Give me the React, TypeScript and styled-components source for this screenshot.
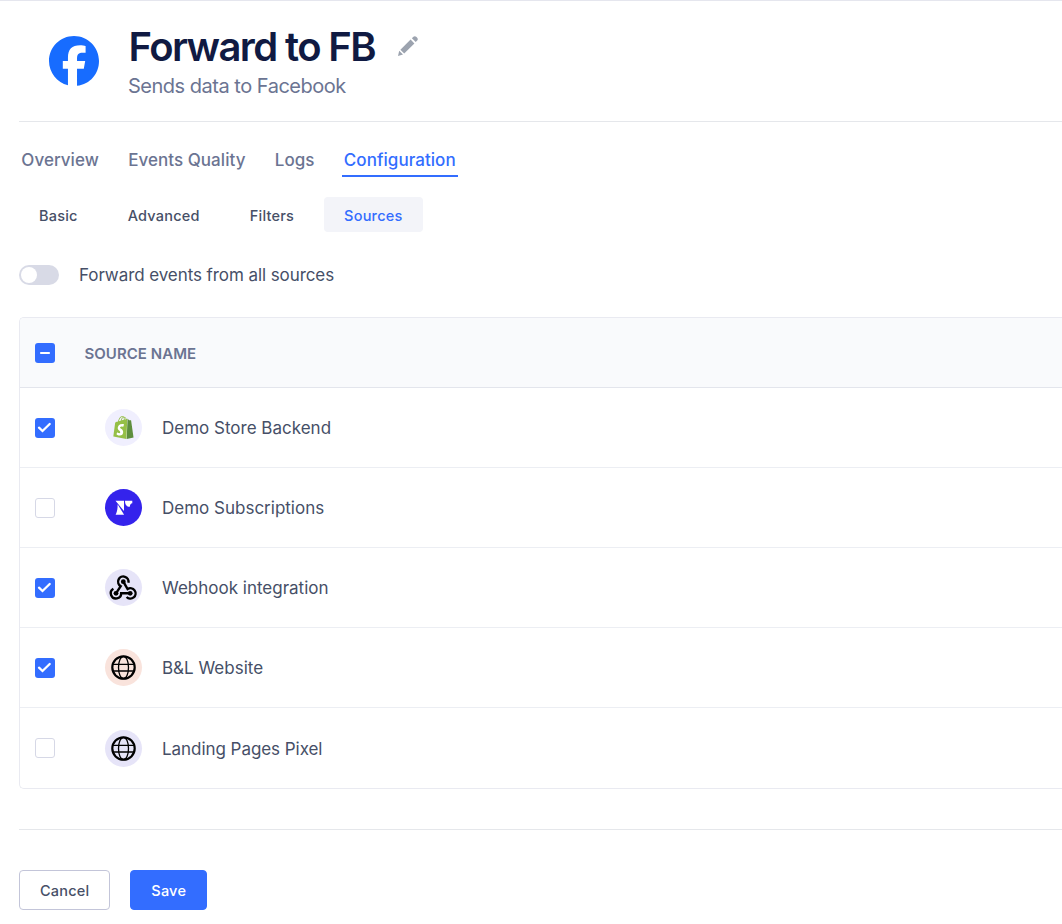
import React from 'react';
import styled, { createGlobalStyle, css } from 'styled-components';

const GlobalStyle = createGlobalStyle`
  *, *::before, *::after { box-sizing: border-box; }
  body {
    margin: 0;
    background: #fff;
    font-family: Inter, "Liberation Sans", sans-serif;
    color: #464f67;
    overflow: hidden;
  }
  button { font: inherit; cursor: pointer; }
`;

const Page = styled.main`
  height: 924px;
  border-top: 1px solid #e5e6ee;
  padding-left: 19px;
  overflow: hidden;
`;

const Header = styled.header`
  display: flex;
  height: 121px;
  padding: 23px 0 0 30px;
  border-bottom: 1px solid #e5e7eb;
`;

const Logo = styled.div`
  width: 50px;
  height: 50px;
  margin: 12px 29px 0 0;
  svg { display: block; }
`;

const TitleRow = styled.div`
  display: flex;
  align-items: center;
  gap: 22px;
  height: 46px;
  padding-left: 0.5px;
  svg { display: block; margin-bottom: 2px; }
`;

const Title = styled.h1`
  margin: 0;
  font-size: 40px;
  line-height: 46px;
  font-weight: 620;
  letter-spacing: -1.6px;
  color: #101a42;
  white-space: nowrap;
`;

const Subtitle = styled.p`
  margin: 3px 0 0;
  font-size: 20px;
  line-height: 26px;
  letter-spacing: -0.49px;
  color: #6b7492;
`;

const Tabs = styled.nav`
  display: flex;
  gap: 24.7px;
  margin-top: 22px;
`;

const Tab = styled.button<{ $active?: boolean }>`
  height: 33px;
  padding: 1px 2.300px 0;
  border: 0;
  border-bottom: 2px solid ${(p) => (p.$active ? '#336dff' : 'transparent')};
  background: none;
  font-size: 17px;
  letter-spacing: 0.05px;
  font-weight: 470;
  white-space: nowrap;
  color: ${(p) => (p.$active ? '#336dff' : '#6b7492')};
`;

const SubTabs = styled.nav`
  display: flex;
  gap: 10px;
  margin-top: 20px;
`;

const SubTab = styled.button<{ $active?: boolean }>`
  height: 35px;
  padding: 2px 20px 0;
  border: 0;
  border-radius: 4px;
  background: ${(p) => (p.$active ? '#f3f4f9' : 'none')};
  font-size: 14.5px;
  font-weight: 500;
  letter-spacing: 0.22px;
  color: ${(p) => (p.$active ? '#336dff' : '#464f67')};
`;

const ToggleRow = styled.label`
  display: flex;
  align-items: center;
  gap: 20px;
  height: 24px;
  margin-top: 31px;
  font-size: 17px;
  letter-spacing: -0.08px;
  white-space: nowrap;
`;

const Switch = styled.span`
  width: 40px;
  height: 20px;
  padding: 2px;
  border-radius: 10px;
  background: #d8dae6;
  &::before {
    content: '';
    display: block;
    width: 16px;
    height: 16px;
    border-radius: 50%;
    background: #fff;
  }
`;

const Table = styled.section`
  margin-top: 30px;
  border: 1px solid #e9eaf1;
  border-right: 0;
  border-radius: 5px 0 0 5px;
  overflow: hidden;
`;

const HeadRow = styled.div`
  display: flex;
  align-items: center;
  gap: 29.5px;
  height: 70px;
  padding-left: 15px;
  background: #f9fafc;
  border-bottom: 1px solid #e3e5ec;
`;

const HeadLabel = styled.span`
  padding-top: 2px;
  font-size: 15px;
  font-weight: 600;
  letter-spacing: 0.04px;
  color: #6b7492;
`;

const Name = styled.span`
  font-size: 17px;
  white-space: nowrap;
`;

const Row = styled.div`
  display: flex;
  align-items: center;
  height: 80px;
  padding-left: 15px;
  border-bottom: 1px solid #eceef3;
  &:last-child { border-bottom: 0; }
  &:last-child ${Name} { padding-top: 1px; letter-spacing: -0.05px; }
`;

const Check = styled.span<{ $on: boolean }>`
  width: 20px;
  height: 20px;
  border-radius: 3px;
  ${(p) =>
    p.$on
      ? css`background: #336dff;`
      : css`background: #fff; border: 1px solid #d6d8e6;`}
  svg { display: block; }
`;

const Avatar = styled.span<{ $bg: string }>`
  display: flex;
  align-items: center;
  justify-content: center;
  width: 37px;
  height: 37px;
  margin: 0 20px 0 50px;
  border-radius: 50%;
  background: ${(p) => p.$bg};
`;

const Footer = styled.footer`
  display: flex;
  gap: 20px;
  margin-top: 40px;
  padding-top: 40px;
  border-top: 1px solid #e5e7eb;
`;

const Button = styled.button<{ $primary?: boolean }>`
  height: 40px;
  padding: 1px 20px 0;
  border: 1px solid ${(p) => (p.$primary ? '#336dff' : '#c3c5d9')};
  border-radius: 4px;
  background: ${(p) => (p.$primary ? '#336dff' : '#fff')};
  color: ${(p) => (p.$primary ? '#fff' : '#464f67')};
  font-size: 14.5px;
  font-weight: 500;
  letter-spacing: 0.2px;
`;

const FacebookLogo = () => (
  <svg width="50" height="50" viewBox="0 0 500 500">
    <path
      fill="#176cff"
      d="M500 250C500 111.929 388.071 0 250 0S0 111.929 0 250c0 117.24 80.715 215.622 189.606 242.638V326.4h-51.552V250h51.552v-32.919c0-85.092 38.508-124.532 122.048-124.532 15.838 0 43.167 3.105 54.347 6.21v69.254c-5.901-.621-16.149-.932-28.882-.932-40.993 0-56.832 15.528-56.832 55.9V250h81.659l-14.028 76.396h-67.631v171.77C413.771 482.777 500 376.452 500 250"
    />
  </svg>
);

const PencilIcon = () => (
  <svg width="22" height="22" viewBox="0 0 22 22" fill="#9ca3af">
    <path d="M1 21l1.200-5.200 3.800 3.800zM3.400 14.800L13.600 4.600l3.800 3.800L7.200 18.600zM14.900 3.300l1.500-1.500c.8-.8 2-.8 2.800 0l1 1c.8.8.8 2 0 2.800l-1.500 1.500z" />
  </svg>
);

const ShopifyIcon = () => (
  <svg width="23" height="23" viewBox="0 0 24 24">
    <path fill="#fff" d="M4 8h9v14H4z" />
    <path
      fill="#5e8e3e"
      d="M15.337 23.979l7.216-1.561s-2.604-17.613-2.625-17.73c-.018-.116-.114-.192-.211-.192s-1.929-.136-1.929-.136-1.275-1.274-1.439-1.411c-.045-.037-.075-.057-.121-.074l-.914 21.104z"
    />
    <path
      fill="#95bf47"
      fillRule="evenodd"
      d="M11.71 11.305s-.81-.424-1.774-.424c-1.447 0-1.504.906-1.504 1.141 0 1.232 3.24 1.715 3.24 4.629 0 2.295-1.44 3.76-3.406 3.76-2.354 0-3.54-1.465-3.54-1.465l.646-2.086s1.245 1.066 2.28 1.066c.675 0 .975-.545.975-.932 0-1.619-2.654-1.694-2.654-4.359-.034-2.237 1.571-4.416 4.827-4.416 1.257 0 1.875.361 1.875.361l-.945 2.715zM11.17.83c.136 0 .271.038.405.135-.984.465-2.064 1.639-2.508 3.992-.656.213-1.293.405-1.889.578C7.697 3.75 8.951.84 11.17.84zm1.235 2.949v.135c-.754.232-1.583.484-2.394.736.466-1.777 1.333-2.645 2.085-2.971.193.501.309 1.176.309 2.1zm.539-2.234c.694.074 1.141.867 1.429 1.755-.349.114-.735.231-1.158.366v-.252c0-.752-.096-1.371-.271-1.871zm2.992 1.289c-.02 0-.06.021-.078.021s-.289.075-.714.21c-.423-1.233-1.176-2.37-2.508-2.37h-.115C12.135.209 11.669 0 11.265 0 8.159 0 6.675 3.877 6.21 5.846c-1.194.365-2.063.636-2.16.674-.675.213-.694.232-.772.87-.075.462-1.83 14.063-1.83 14.063L15.009 24z"
    />
  </svg>
);

const SubscriptionIcon = () => (
  <svg width="37" height="37" viewBox="0 0 37 37" fill="#fff">
    <path d="M10.500 11.800h8.500v10.300zM12.600 15.300l6.500 10.500h-8.500c1.500-3 2.100-6 2-10.500zM20 11.800h7.300v2.500c-1.500 0-2.300 1.500-2.500 3.500-3 0-4.800-2-4.800-6z" />
  </svg>
);

const WebhookIcon = () => (
  <svg width="37" height="37" viewBox="0 0 37 37" fill="none" stroke="#000" strokeWidth="2.400">
    <path d="M23.400 13.800A5.200 5.200 0 1 0 15.700 17.200L11 24.300" />
    <path d="M8.400 19.800A5.200 5.200 0 1 0 16.200 24.300H25" />
    <path d="M18.300 12.700L22.600 20A5.200 5.200 0 1 1 21.600 28" />
    <g fill="#000" stroke="none">
      <circle cx="18.300" cy="12.700" r="2.400" />
      <circle cx="11" cy="24.300" r="2.400" />
      <circle cx="25.200" cy="24.300" r="2.400" />
    </g>
  </svg>
);

const GlobeIcon = () => (
  <svg width="25" height="25" viewBox="0 0 25 25" fill="none" stroke="#000">
    <circle cx="12.500" cy="12.500" r="11.200" strokeWidth="2.200" />
    <ellipse cx="12.500" cy="12.500" rx="5" ry="11.200" strokeWidth="1.300" />
    <path d="M1.500 9.300h22M1.500 16h22" strokeWidth="1.300" />
  </svg>
);

const CheckMark = () => (
  <svg width="20" height="20" viewBox="0 0 20 20" fill="none" stroke="#fff" strokeWidth="2.300">
    <path d="M4 9.700l3.500 3.300 7.200-7" strokeLinecap="round" />
  </svg>
);

const DashMark = () => (
  <svg width="20" height="20" viewBox="0 0 20 20" fill="none" stroke="#fff" strokeWidth="2.200">
    <path d="M6 10h8" strokeLinecap="round" />
  </svg>
);

const sources = [
  { name: 'Demo Store Backend', on: true, bg: '#f0effe', icon: <ShopifyIcon /> },
  { name: 'Demo Subscriptions', on: false, bg: '#3423ec', icon: <SubscriptionIcon /> },
  { name: 'Webhook integration', on: true, bg: '#e6e4f8', icon: <WebhookIcon /> },
  { name: 'B&L Website', on: true, bg: '#f9e3dc', icon: <GlobeIcon /> },
  { name: 'Landing Pages Pixel', on: false, bg: '#e6e4f8', icon: <GlobeIcon /> },
];

export default function App() {
  return (
    <>
      <GlobalStyle />
      <Page>
        <Header>
          <Logo><FacebookLogo /></Logo>
          <div>
            <TitleRow>
              <Title>Forward to FB</Title>
              <PencilIcon />
            </TitleRow>
            <Subtitle>Sends data to Facebook</Subtitle>
          </div>
        </Header>
        <Tabs>
          <Tab>Overview</Tab>
          <Tab>Events Quality</Tab>
          <Tab>Logs</Tab>
          <Tab $active>Configuration</Tab>
        </Tabs>
        <SubTabs>
          <SubTab>Basic</SubTab>
          <SubTab>Advanced</SubTab>
          <SubTab>Filters</SubTab>
          <SubTab $active>Sources</SubTab>
        </SubTabs>
        <ToggleRow>
          <Switch />
          <span>Forward events from all sources</span>
        </ToggleRow>
        <Table>
          <HeadRow>
            <Check $on><DashMark /></Check>
            <HeadLabel>SOURCE NAME</HeadLabel>
          </HeadRow>
          {sources.map((s) => (
            <Row key={s.name}>
              <Check $on={s.on}>{s.on && <CheckMark />}</Check>
              <Avatar $bg={s.bg}>{s.icon}</Avatar>
              <Name>{s.name}</Name>
            </Row>
          ))}
        </Table>
        <Footer>
          <Button>Cancel</Button>
          <Button $primary>Save</Button>
        </Footer>
      </Page>
    </>
  );
}
